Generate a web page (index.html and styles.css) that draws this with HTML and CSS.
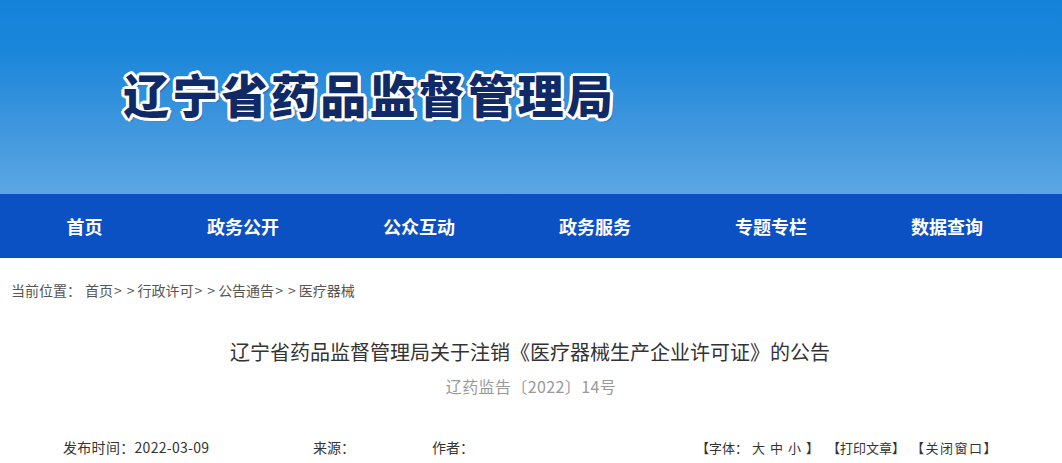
FILE: index.html
```html
<!DOCTYPE html>
<html lang="zh">
<head>
<meta charset="utf-8">
<title>辽宁省药品监督管理局</title>
<link rel="stylesheet" href="styles.css">
</head>
<body>
<header class="banner">
  <h1 class="site-title">辽宁省药品监督管理局</h1>
</header>
<nav class="nav">
  <a class="nav-item nav-first" href="#">首页</a>
  <a class="nav-item" href="#">政务公开</a>
  <a class="nav-item" href="#">公众互动</a>
  <a class="nav-item" href="#">政务服务</a>
  <a class="nav-item" href="#">专题专栏</a>
  <a class="nav-item" href="#">数据查询</a>
</nav>
<div class="crumbs"><span class="here">当前位置：</span><a href="#">首页</a><span class="sep">&gt;</span><span class="sep">&gt;</span><a href="#">行政许可</a><span class="sep">&gt;</span><span class="sep">&gt;</span><a href="#">公告通告</a><span class="sep">&gt;</span><span class="sep">&gt;</span><a href="#">医疗器械</a></div>
<article class="article">
  <h2 class="art-title">辽宁省药品监督管理局关于注销《医疗器械生产企业许可证》的公告</h2>
  <div class="art-sub">辽药监告〔2022〕14号</div>
  <div class="meta">
    <div class="meta-left">
      <span class="m-date">发布时间：2022-03-09</span>
      <span class="m-src">来源：</span>
      <span class="m-author">作者：</span>
    </div>
    <div class="meta-right">
      <span class="tool">【字体：<a class="fs" href="#">大</a><a class="fs" href="#">中</a><a class="fs" href="#">小</a><span class="close-br">】</span></span>
      <a class="tool" href="#">【打印文章】</a>
      <a class="tool tool-wide" href="#">【关闭窗口】</a>
    </div>
  </div>
</article>
</body>
</html>
```
FILE: styles.css
```css
* { box-sizing: border-box; }
body {
  margin: 0;
  font-family: "Microsoft YaHei", "Noto Sans CJK SC", sans-serif;
  background: #fff;
  color: #333;
}
a { color: inherit; text-decoration: none; }
.banner {
  height: 194px;
  background: linear-gradient(to bottom, #1582da 0%, #1a86da 25%, #3a94dd 60%, #5ca7e3 100%);
  padding: 63px 0 0 123px;
}
.site-title {
  margin: 0;
  font-family: "Noto Sans CJK SC", sans-serif;
  font-weight: 900;
  font-size: 46px;
  line-height: 60px;
  letter-spacing: 3.3px;
  color: #0f2a66;
  text-shadow:
    2px 0 0 #fff, -2px 0 0 #fff, 0 2px 0 #fff, 0 -2px 0 #fff,
    2px 2px 0 #fff, -2px -2px 0 #fff, 2px -2px 0 #fff, -2px 2px 0 #fff,
    3px 0 0 #fff, -3px 0 0 #fff, 0 3px 0 #fff, 0 -3px 0 #fff,
    3px 1px 0 #eef, -3px 1px 0 #eef, 1px 3px 0 #eef, 1px -3px 0 #eef,
    3px 3px 1px rgba(10,40,100,0.5);
}
.nav {
  height: 64px;
  background: #0c51c3;
  display: grid;
  grid-template-columns: 155px repeat(5, 176px);
  align-items: center;
}
.nav-item {
  text-align: center;
  color: #fff;
  font-family: "Noto Sans CJK SC", sans-serif;
  font-weight: 700;
  font-size: 18px;
  letter-spacing: 0;
}
.nav-first { padding-left: 14px; }
.crumbs {
  padding: 22px 0 0 11px;
  font-size: 14px;
  line-height: 20px;
  color: #555;
}
.crumbs a { color: #555; }
.here { margin-right: 4px; }
.sep { margin: 0 0 0 1px; }
.sep + .sep { margin: 0 3px 0 5px; }
.article { padding-top: 38px; }
.art-title {
  margin: 0;
  text-align: center;
  font-weight: 400;
  font-size: 20px;
  line-height: 28px;
  color: #333;
  padding-right: 2px;
}
.art-sub {
  margin-top: 9px;
  text-align: center;
  font-size: 16px;
  line-height: 22px;
  letter-spacing: 0.4px;
  color: #999;
}
.meta {
  margin-top: 40px;
  display: flex;
  justify-content: space-between;
  align-items: baseline;
  padding: 0 64px 0 63px;
  font-size: 14px;
  line-height: 20px;
  color: #333;
}
.meta-left { display: flex; }
.m-date { width: 250px; letter-spacing: 0.3px; }
.m-src { width: 119px; }
.meta-right { display: flex; gap: 8px; font-size: 13px; }
.tool-wide { letter-spacing: 1.5px; margin-left: -2px; }
.fs { margin-left: 5px; }
.fs:first-child { margin-left: 4px; }
.close-br { margin-left: 5px; }
```
